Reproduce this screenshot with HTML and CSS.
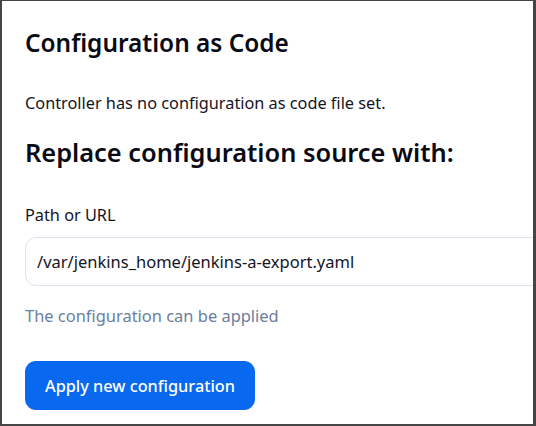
FILE: index.html
```html
<!DOCTYPE html>
<html lang="en">
<head>
<meta charset="utf-8">
<title>Configuration as Code</title>
<link rel="stylesheet" href="styles.css">
</head>
<body>
<div class="frame">
  <div class="content">
    <h1 class="title">Configuration as Code</h1>
    <p class="status">Controller has no configuration as code file set.</p>
    <h2 class="subtitle">Replace configuration source with:</h2>
    <label class="field-label" for="src">Path or URL</label>
    <div class="input-wrap">
      <input class="input" id="src" type="text" value="/var/jenkins_home/jenkins-a-export.yaml">
    </div>
    <p class="hint">The configuration can be applied</p>
    <button class="btn" type="button">Apply new configuration</button>
  </div>
</div>
</body>
</html>
```

FILE: styles.css
```css
* { box-sizing: border-box; }
html, body { margin: 0; padding: 0; background: #fff; }
body {
  font-family: "Noto Sans", "Open Sans", sans-serif;
  color: #14141f;
}
.frame {
  width: 536px;
  height: 426px;
  border-style: solid;
  border-color: #454545;
  border-width: 1px 3px 2px 2px;
  overflow: hidden;
  background: #fff;
}
.content {
  padding: 26px 0 0 23px;
  display: flex;
  flex-direction: column;
  align-items: flex-start;
}
.title {
  margin: 0;
  font-size: 24.4px;
  font-weight: 600;
  line-height: 32px;
  color: #0a0a14;
}
.status {
  margin: 33px 0 0;
  font-size: 16.3px;
  line-height: 22px;
}
.subtitle {
  margin: 21px 0 0;
  font-size: 25.4px;
  font-weight: 600;
  line-height: 34px;
  color: #0a0a14;
}
.field-label {
  margin-top: 35px;
  font-size: 16.3px;
  line-height: 22px;
}
.input-wrap {
  margin-top: 11px;
  width: 540px;
}
.input {
  width: 100%;
  height: 49px;
  border: 1px solid #dbe2eb;
  border-radius: 11px;
  padding: 0 11px;
  font-family: inherit;
  font-size: 16.5px;
  color: #14141f;
  background: #fff;
  outline: none;
}
.hint {
  margin: 19px 0 0;
  font-size: 16.45px;
  line-height: 22px;
  color: #6a7f9f;
}
.btn {
  margin-top: 34px;
  height: 49px;
  padding: 0 20px;
  border: none;
  border-radius: 11px;
  background: #0868f0;
  color: #fff;
  font-family: inherit;
  font-size: 16.3px;
  font-weight: 500;
}
```
